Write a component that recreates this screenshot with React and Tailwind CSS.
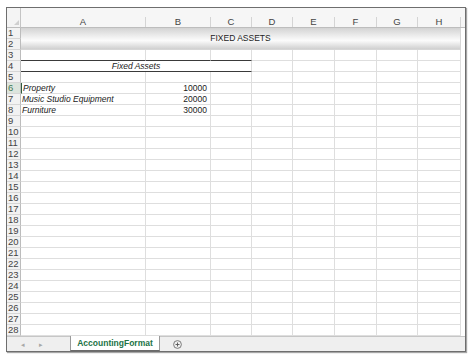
import React from "react";

const LETTERS = ["A", "B", "C", "D", "E", "F", "G", "H"];
const GRID = "border-r border-b border-[#dedede]";
const DARK_B = "border-r border-b border-r-[#dedede] border-b-[#3a3a3a]";

function RowHead({ n, active }) {
  return (
    <div
      className={
        "flex items-center pl-[1px] text-[9.5px] leading-none border-r border-b border-r-[#bcbcbc] border-b-[#d6d6d6] " +
        (active ? "bg-[#dde5dd] text-[#3f7a55]" : "bg-[#f2f2f2] text-[#444]")
      }
    >
      {n}
    </div>
  );
}

function Cell({ cls = GRID, children, right, left, activeLeft }) {
  return (
    <div
      className={
        cls +
        " flex items-center overflow-visible whitespace-nowrap text-[8.5px] leading-none text-[#1a1a1a] " +
        (right ? "justify-end pr-[3px] " : "") +
        (left ? "pl-[1px] italic " : "") +
        (activeLeft ? "border-l border-l-[#2f5a3c] " : "")
      }
    >
      {children}
    </div>
  );
}

function Edge() {
  return <div className="bg-white" />;
}

export default function App() {
  const items = [];
  items.push(
    <div
      key="corner"
      className="flex items-end justify-end pr-[1px] pb-[2px] bg-[#f4f4f4] border-r border-b border-r-[#c4c4c4] border-b-[#bdbdbd]"
    >
      <div className="w-0 h-0 border-l-[5px] border-l-transparent border-b-[5px] border-b-[#cfcfcf]" />
    </div>
  );
  LETTERS.forEach((l) => {
    items.push(
      <div key={"h" + l} className="flex flex-col bg-[#f6f6f6] border-b border-[#bdbdbd]">
        <div className="h-[9px]" />
        <div className="flex-1 flex items-center justify-center border-r border-[#d4d4d4] text-[9.5px] leading-none text-[#444]">
          {l}
        </div>
      </div>
    );
  });
  items.push(<div key="hedge" className="bg-[#f6f6f6] border-b border-[#bdbdbd]" />);

  for (let r = 1; r <= 28; r++) {
    items.push(<RowHead key={"rh" + r} n={r} active={r === 6} />);
    if (r === 1) {
      items.push(
        <div
          key="band"
          className="col-span-8 row-span-2 flex items-center justify-center border-r border-b border-[#d6d6d6] bg-[linear-gradient(to_bottom,#d3d3d3,#f2f2f2_45%,#fbfbfb_60%,#d0d0d0)] text-[8.5px] leading-none text-[#222]"
        >
          FIXED ASSETS
        </div>
      );
      items.push(<Edge key={"e" + r} />);
      continue;
    }
    if (r === 2) {
      items.push(<Edge key={"e" + r} />);
      continue;
    }
    if (r === 4) {
      items.push(
        <div
          key="fa"
          className="col-span-3 flex items-center justify-center border-r border-b border-r-[#dedede] border-b-[#3a3a3a] italic text-[8.5px] leading-none text-[#1a1a1a]"
        >
          Fixed Assets
        </div>
      );
      for (let c = 3; c < 8; c++) items.push(<Cell key={r + "-" + c} />);
      items.push(<Edge key={"e" + r} />);
      continue;
    }
    for (let c = 0; c < 8; c++) {
      let content = null;
      let right = false;
      let left = false;
      if (c === 0 && r === 6) { content = "Property"; left = true; }
      if (c === 0 && r === 7) { content = "Music Studio Equipment"; left = true; }
      if (c === 0 && r === 8) { content = "Furniture"; left = true; }
      if (c === 1 && r === 6) { content = "10000"; right = true; }
      if (c === 1 && r === 7) { content = "20000"; right = true; }
      if (c === 1 && r === 8) { content = "30000"; right = true; }
      const cls = r === 3 && c < 3 ? DARK_B : GRID;
      items.push(
        <Cell key={r + "-" + c} cls={cls} right={right} left={left} activeLeft={r === 6 && c === 0}>
          {content}
        </Cell>
      );
    }
    items.push(<Edge key={"e" + r} />);
  }

  return (
    <div className="w-[474px] h-[363px] bg-white pl-[6px] pt-[7px] font-['Liberation_Sans',Arial,sans-serif]">
      <div className="w-[460px] h-[345px] border border-[#6e6e6e] shadow-[1px_1px_1px_rgba(0,0,0,0.35)] flex flex-col bg-white overflow-hidden">
        <div className="grid grid-cols-[14px_125px_65px_41px_41px_42px_42px_41px_43px_4px] grid-rows-[20px_repeat(28,11px)]">
          {items}
        </div>
        <div className="h-[15px] flex items-stretch bg-[#efefef] border-t border-[#c6c6c6]">
          <div className="w-[63px] flex items-center pl-[14px] gap-[14px] text-[7px] leading-none text-[#a8a8a8]">
            <span>◂</span>
            <span>▸</span>
          </div>
          <div className="w-[90px] -mt-[1px] flex items-center justify-center bg-white border-x border-b border-[#9a9a9a] border-b-[#6a6a6a] text-[8.5px] font-bold leading-none text-[#217346]">
            AccountingFormat
          </div>
          <div className="w-[34px] flex items-center justify-center">
            <svg width="9" height="9" viewBox="0 0 9 9">
              <circle cx="4.5" cy="4.5" r="3.9" fill="none" stroke="#6f6f6f" strokeWidth="0.9" />
              <path d="M4.5 2.5V6.5M2.5 4.5H6.5" stroke="#555" strokeWidth="0.9" />
            </svg>
          </div>
        </div>
      </div>
    </div>
  );
}
